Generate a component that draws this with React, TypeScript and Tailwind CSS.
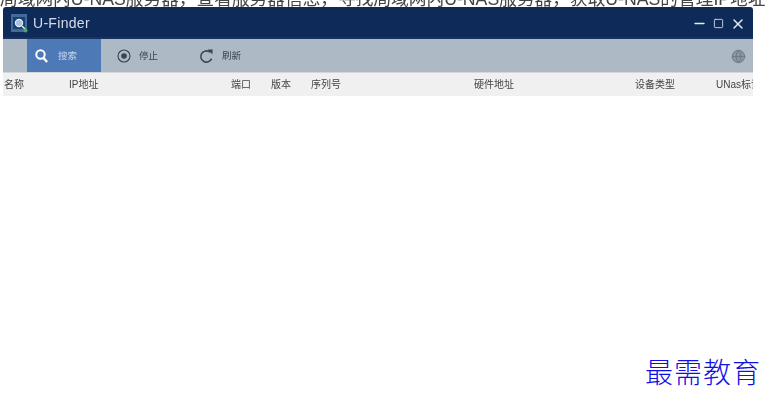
import React from 'react';
import { Minus, Square, X, Globe } from 'lucide-react';

const CJK = "font-['Liberation_Sans','Noto_Sans_CJK_SC',sans-serif]";

const columns = [
  { label: '名称', width: 'w-[65px]' },
  { label: 'IP地址', width: 'w-[162px]' },
  { label: '端口', width: 'w-[40px]' },
  { label: '版本', width: 'w-[40px]' },
  { label: '序列号', width: 'w-[163px]' },
  { label: '硬件地址', width: 'w-[161px]' },
  { label: '设备类型', width: 'w-[81px]' },
  { label: 'UNas标识', width: 'w-[60px]' },
];

const App: React.FC = () => {
  return (
    <div className={`h-[403px] w-[768px] overflow-hidden bg-white ${CJK}`}>
      {/* cut off article text above the screenshot */}
      <div className="flex h-[7px] items-end overflow-hidden whitespace-nowrap text-[17.7px] leading-[18px] text-[#444444]">
        <div className="-mb-[1px] shrink-0 blur-[0.3px]">局域网内U-NAS服务器，查看服务器信息，寻找局域网内U-NAS服务器，获取U-NAS的管理IP地址</div>
      </div>

      <div className="ml-[3px] w-[750px] overflow-hidden rounded-t-[3px] blur-[0.4px]">
        {/* title bar */}
        <div className="flex h-[32px] items-center border-b-2 border-[#17335f] bg-[#0e2a58] pl-[8px] pr-[7px] pt-[3px]">
          <svg width="17" height="19" viewBox="0 0 17 19" className="shrink-0">
            <rect x="0" y="0" width="16" height="18" fill="#3f6c9c" />
            <rect x="2" y="3" width="12" height="12" fill="#1d3f6e" />
            <circle cx="8" cy="9" r="3.6" fill="#9fc4e6" stroke="#e3eef8" strokeWidth="1.2" />
            <path d="M11 12l3 3" stroke="#e3eef8" strokeWidth="1.5" />
            <circle cx="14.5" cy="16.5" r="2" fill="#3fae5a" />
          </svg>
          <span className="ml-[5px] text-[14px] tracking-[0.3px] text-[#d5dde8]">U-Finder</span>
          <div className="ml-auto flex items-center gap-[6px] text-[#e6ebf2]">
            <Minus size={15} strokeWidth={2.6} />
            <Square size={11} strokeWidth={1.8} />
            <X size={16} strokeWidth={2.2} />
          </div>
        </div>

        {/* toolbar */}
        <div className="flex h-[33px] items-stretch bg-[#aeb9c6] pl-[24px] pt-[1px] text-[9.5px] text-[#3a4450]">
          <div className="-mt-[1px] flex w-[74px] items-center bg-[#4e79b7] pl-[8px] pt-[1px] text-[#c9d6ea]">
            <svg width="13" height="14" viewBox="0 0 13 14" className="shrink-0">
              <circle cx="5.5" cy="5.5" r="4.2" fill="none" stroke="#ffffff" strokeWidth="2" />
              <path d="M8.5 9l3.6 4" stroke="#ffffff" strokeWidth="2.4" />
            </svg>
            <span className="ml-[10px]">搜索</span>
          </div>
          <div className="flex w-[81px] items-center pl-[16px]">
            <svg width="14" height="14" viewBox="0 0 14 14" className="shrink-0">
              <circle cx="7" cy="7" r="6" fill="none" stroke="#3a4450" strokeWidth="1.1" />
              <circle cx="7" cy="7" r="2.8" fill="#3a4450" />
            </svg>
            <span className="ml-[8px]">停止</span>
          </div>
          <div className="flex items-center pl-[17px]">
            <svg width="15" height="15" viewBox="0 0 15 15" className="shrink-0">
              <path d="M12.6 9.6A5.6 5.6 0 1 1 11 3.2" fill="none" stroke="#3a4450" strokeWidth="1.6" />
              <path d="M8.6 0.4l5 0.2-0.2 5z" fill="#3a4450" />
            </svg>
            <span className="ml-[8px]">刷新</span>
          </div>
          <div className="ml-auto flex items-center pr-[7px]">
            <Globe size={15} strokeWidth={1.5} className="fill-[#8c96a2] text-[#6f7a86]" />
          </div>
        </div>

        {/* table header */}
        <div className="flex h-[24px] items-center overflow-hidden whitespace-nowrap border-t border-[#d3d6da] bg-[#f0f0f0] pl-[1px] text-[10px] text-[#444444]">
          {columns.map((col) => (
            <div key={col.label} className={`${col.width} shrink-0`}>
              {col.label}
            </div>
          ))}
        </div>
      </div>

      {/* watermark */}
      <div className="mr-[7px] mt-[257px] flex justify-end">
        <span className="font-['Noto_Sans_CJK_SC',serif] text-[28px] font-light leading-[36px] tracking-[1px] text-[#0f0fe8]">最需教育</span>
      </div>
    </div>
  );
};

export default App;
